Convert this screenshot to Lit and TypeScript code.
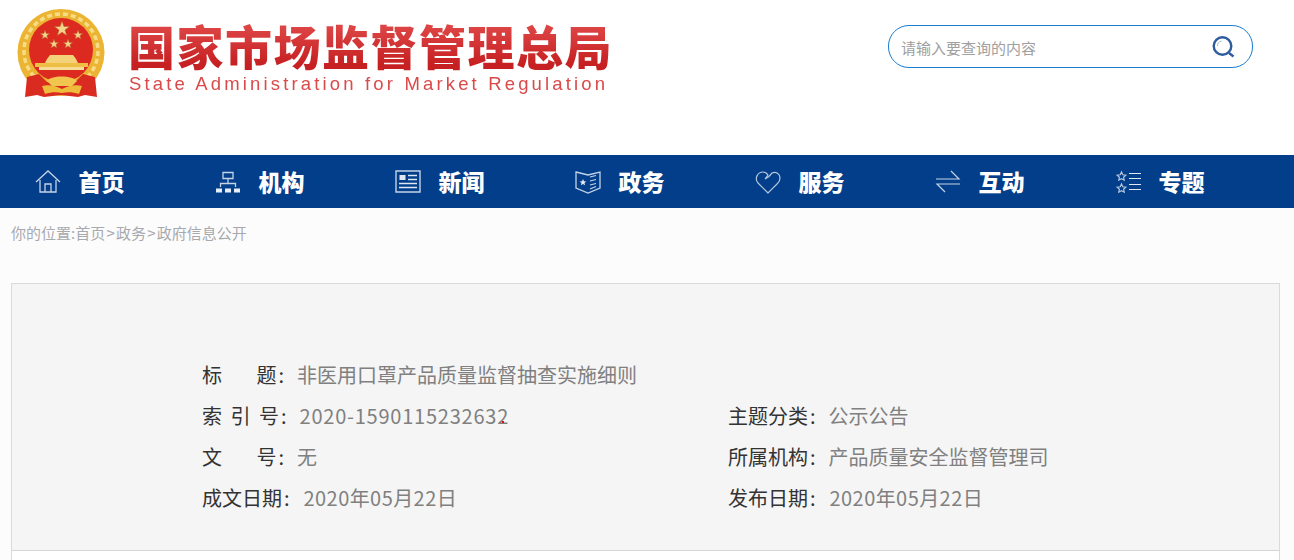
import { LitElement, html, css, svg } from "lit";
import { customElement } from "lit/decorators.js";

const icons: Record<string, unknown> = {
  home: svg`<path d="M1 13 13 2l12 11" fill="none" stroke="#c4d3e6" stroke-width="1.3"/><path d="M5 11v12h16V11M10 23v-8h6v8" fill="none" stroke="#c4d3e6" stroke-width="1.3"/>`,
  org: svg`<path d="M8 3.500h10v6H8zM13 9.500v5M5.500 18v-3.500h15V18" fill="none" stroke="#c4d3e6" stroke-width="1.3"/><path d="M1 19.500h6v4H1zM10 19.500h6v4h-6zM19 19.500h6v4h-6z" fill="#e6edf6"/>`,
  news: svg`<path d="M1 2h24v21H1z" fill="none" stroke="#c4d3e6" stroke-width="1.4"/><path d="M4.500 6h6v5h-6z" fill="#dfe8f3"/><path d="M13 6.500h9M13 10.500h9M4 14.500h18M4 18.500h18" fill="none" stroke="#dfe8f3" stroke-width="1.3"/>`,
  gov: svg`<path d="M1 3l12 3 12-3v16l-12 5-12-5z" fill="none" stroke="#c4d3e6" stroke-width="1.3"/><path d="M8 10l1 2.200 2.300.2-1.800 1.500.6 2.300L8 15l-2.100 1.200.6-2.300-1.800-1.500 2.300-.2z" fill="#dfe8f3"/><path d="M15 8l6-1.500M15 12l6-1.500M15 16l6-1.500M15 20l6-2.500" fill="none" stroke="#c4d3e6" stroke-width="1.2"/>`,
  heart: svg`<path d="M13 24 3 14C-1 9 3 3 8 3c3 0 4 1.500 5 3l-3 4 4-2.500L17 4c4-2 8 1 8 5 0 2-1 4-2.500 5.500z" fill="none" stroke="#b5c7de" stroke-width="1.2"/>`,
  swap: svg`<path d="M1 10h23L16 2M25 15H2l8 8" fill="none" stroke="#c4d3e6" stroke-width="1.2"/>`,
  topic: svg`<path d="M6.500 3l1.300 2.800 3 .4-2.200 2 .6 3-2.700-1.500-2.700 1.500.6-3-2.200-2 3-.4zM6.500 15l1.300 2.800 3 .4-2.200 2 .6 3-2.700-1.500-2.700 1.500.6-3-2.200-2 3-.4z" fill="none" stroke="#b5c7de" stroke-width="1.200"/><path d="M14 4.500h12M14 9.500h12M14 15.500h12M14 20.500h12" fill="none" stroke="#dfe8f3" stroke-width="1.100"/>`,
};
const nav = [["home","首页"],["org","机构"],["news","新闻"],["gov","政务"],["heart","服务"],["swap","互动"],["topic","专题"]];

const star = (x: number, y: number, r: number) => {
  const p: string[] = [];
  for (let i = 0; i < 10; i++) {
    const a = -Math.PI / 2 + (i * Math.PI) / 5;
    const q = i % 2 ? r * 0.4 : r;
    p.push(`${(x + q * Math.cos(a)).toFixed(1)},${(y + q * Math.sin(a)).toFixed(1)}`);
  }
  return svg`<polygon points=${p.join(" ")} fill="#f3d58a" stroke="#b8572a" stroke-width=".5"/>`;
};

@customElement("app-root")
export class AppRoot extends LitElement {
  static styles = css`
    :host { display: block; height: 560px; overflow: hidden; background: #fff;
      font-family: "Noto Sans CJK SC", "Noto Sans", sans-serif; }
    .header { height: 155px; display: flex; align-items: flex-start; box-sizing: border-box; }
    .emblem { width: 90px; height: 90px; margin: 9px 0 0 16px; flex: none; display: block; filter: blur(.5px); }
    .brand { margin: 16px 0 0 22px; width: 490px; flex: none; filter: blur(.4px); }
    .cn { font-size: 47px; line-height: 57px; font-weight: 900; letter-spacing: 1.5px; white-space: nowrap;
      color: #d02a2c; background: linear-gradient(#dd4444 20%, #c62022 85%); -webkit-background-clip: text; background-clip: text; -webkit-text-fill-color: transparent; }
    .en { font-family: "Liberation Sans", sans-serif; font-size: 18.5px; line-height: 22px; letter-spacing: 3.16px; color: #d94a49; white-space: nowrap; margin-left: 1px; }
    .search { margin: 25px 0 0 270px; width: 365px; height: 43px; box-sizing: border-box; border: 1px solid #1a7dd0; border-radius: 21px;
      display: flex; align-items: center; justify-content: space-between; padding: 0 16px 0 12px; flex: none; }
    .search span { font-size: 15px; color: #a0a0a0; margin-top: 2px; }
    .search svg { filter: blur(.3px); }
    .nav { height: 53px; background: #033e8a; display: flex; padding-left: 35px; }
    .item { width: 180px; display: flex; align-items: center; flex: none; box-sizing: border-box; }
    .item svg { width: 26px; height: 26px; flex: none; filter: blur(.25px); }
    .item span { margin-left: 17.5px; font-size: 23px; font-weight: 900; color: #fff; position: relative; top: -1px; }
    .crumb { height: 75px; background: #fcfcfc; box-sizing: border-box; padding: 14px 0 0 11px; font-size: 15px; line-height: 22px; color: #a8a9ae; white-space: nowrap; }
    .crumb i { font-style: normal; margin: 0 1.25px; }
    .wrap { background: #fcfcfc; height: 277px; padding: 0 14px 0 11px; }
    .box { border: 1px solid #d9dadb; border-bottom: none; height: 277px; background: #fff; box-sizing: border-box; }
    .panel { background: #f5f5f5; height: 267px; box-sizing: border-box; border-bottom: 1px solid #d6d6d6; padding: 70px 0 0 190px; }
    .grid { display: grid; grid-template-columns: 526px 1fr; grid-auto-rows: 41px; font-size: 20px; line-height: 41px; font-weight: 400; }
    .cell { white-space: nowrap; }
    .l { color: #333; }
    .l b { font-weight: inherit; margin-left: 2px; }
    .spaced { word-spacing: 4px; }
    .v { color: #808080; margin-left: 13px; }
    .v1 { margin-left: 13px; }
    .dot { position: relative; }
    .dot::after { content: ""; position: absolute; width: 2px; height: 2px; background: #e01010; right: 5px; bottom: 7px; }
    .num { letter-spacing: .77px; margin-left: 13px; }
    .date { letter-spacing: .43px; margin-left: 14px; }
  `;
  render() {
    return html`
      <div class="header">
        <svg class="emblem" viewBox="0 0 90 90">
          <circle cx="45" cy="43.500" r="43.500" fill="#ecb433"/>
          <circle cx="45" cy="42" r="37" fill="none" stroke="#f7dc86" stroke-width="3.500" stroke-dasharray="5 3"/>
          <circle cx="45" cy="41" r="32" fill="#dc2a20"/>
          ${star(46, 20, 8)}${star(29, 26, 5)}${star(62, 26, 5)}${star(38, 35, 5)}${star(52, 35, 5)}
          <path d="M31 50l3-4h23l3 4 2 4H29z" fill="#f4d27a"/>
          <path d="M19 54h53v4H19z" fill="#eebf45"/><path d="M23 58h45v3H23z" fill="#f5dd96"/>
          <path d="M11 68l12-3 8 8 14 2 14-2 8-8 12 3 2 20-12-2-7 2-17-2-17 2-7-2-12 2z" fill="#d92b1f"/>
          <path d="M31 72c3-6 26-6 30 0l-5 5H36z" fill="#f0c64f"/>
          <path d="M26 77c7-2 14 0 20 3 6-3 13-5 20-3l-3 8c-6-2-12-2-17-1-5-1-11-1-17 1z" fill="#eebc3a"/>
        </svg>
        <div class="brand">
          <div class="cn">国家市场监督管理总局</div>
          <div class="en">State Administration for Market Regulation</div>
        </div>
        <div class="search">
          <span>请输入要查询的内容</span>
          <svg width="24" height="24" viewBox="0 0 24 24"><circle cx="10.500" cy="11" r="8.800" fill="none" stroke="#2d5c9e" stroke-width="2.400"/><path d="M5.500 11a5 5 0 0 1 4-5" fill="none" stroke="#9db5d6" stroke-width="1"/><path d="M17 18l4.500 3.500" stroke="#2d5c9e" stroke-width="2.400" fill="none"/></svg>
        </div>
      </div>
      <div class="nav">
        ${nav.map(([i, t]) => html`<div class="item"><svg viewBox="0 0 26 26">${icons[i]}</svg><span>${t}</span></div>`)}
      </div>
      <div class="crumb">你的位置:首页<i>&gt;</i>政务<i>&gt;</i>政府信息公开</div>
      <div class="wrap"><div class="box"><div class="panel"><div class="grid">
        <div class="cell"><span class="l">标&emsp;&ensp;&nbsp;题<b>:</b></span><span class="v v1">非医用口罩产品质量监督抽查实施细则</span></div><div></div>
        <div class="cell"><span class="l spaced">索 引 号<b>:</b></span><span class="v num dot">2020-1590115232632</span></div>
        <div class="cell"><span class="l">主题分类<b>:</b></span><span class="v">公示公告</span></div>
        <div class="cell"><span class="l">文&emsp;&ensp;&nbsp;号<b>:</b></span><span class="v v1">无</span></div>
        <div class="cell"><span class="l">所属机构<b>:</b></span><span class="v">产品质量安全监督管理司</span></div>
        <div class="cell"><span class="l">成文日期<b>:</b></span><span class="v date">2020年05月22日</span></div>
        <div class="cell"><span class="l">发布日期<b>:</b></span><span class="v date">2020年05月22日</span></div>
      </div></div></div></div>
    `;
  }
}
